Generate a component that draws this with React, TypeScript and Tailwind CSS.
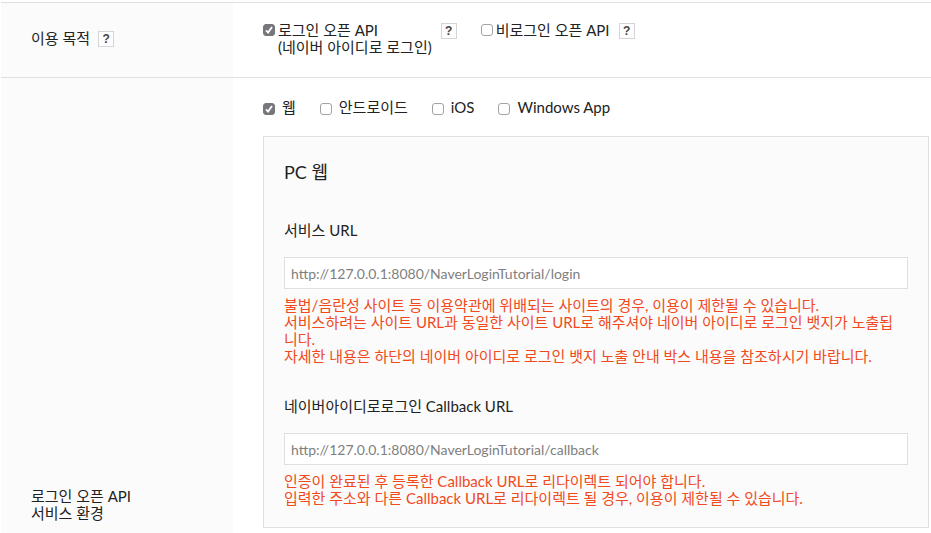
import React, { type ReactNode } from "react";

function HelpButton({ label }: { label: string }) {
  return (
    <button
      type="button"
      aria-label={label}
      className="flex size-4 shrink-0 items-center justify-center border border-[#d5d5d8] bg-[#fdfdfd] font-['Liberation_Sans',sans-serif] text-xs font-bold leading-none text-[#444444]"
    >
      ?
    </button>
  );
}

function Checkbox({ id, checked = false }: { id: string; checked?: boolean }) {
  return (
    <span className="grid size-3 shrink-0">
      <input
        id={id}
        type="checkbox"
        defaultChecked={checked}
        className="peer col-start-1 row-start-1 size-3 appearance-none rounded-[3px] border border-[#a3a3a6] bg-white checked:border-[#77777b] checked:bg-[#77777b]"
      />
      <svg
        viewBox="0 0 12 12"
        className="pointer-events-none invisible col-start-1 row-start-1 size-3 peer-checked:visible"
        fill="none"
        stroke="white"
        strokeWidth="1.8"
        aria-hidden="true"
      >
        <path d="M3 6.3 5.1 8.5 9 3" />
      </svg>
    </span>
  );
}

function Platform({ id, checked, children }: { id: string; checked?: boolean; children: ReactNode }) {
  return (
    <div className="flex items-center gap-[7px]">
      <span className="pt-0.5">
        <Checkbox id={id} checked={checked} />
      </span>
      <label htmlFor={id}>{children}</label>
    </div>
  );
}

function UrlField({ id, label, placeholder, children }: { id: string; label: string; placeholder: string; children: ReactNode }) {
  return (
    <div className="flex flex-col">
      <label htmlFor={id}>{label}</label>
      <input
        id={id}
        type="text"
        placeholder={placeholder}
        className="mt-[18px] h-8 w-full border border-[#dfdfe2] bg-white px-1.5 text-sm placeholder:text-[#808080] placeholder:opacity-100"
      />
      <div className="mt-2 text-[#f04a1d]">{children}</div>
    </div>
  );
}

export default function App() {
  return (
    <form className="flex min-h-screen flex-col bg-white pl-px pt-0.5 font-['Lato','Noto_Sans_CJK_KR',sans-serif] text-[15px] leading-[17px] text-[#222222]">
      <section className="flex border-y border-[#dfdfe5]">
        <div className="flex w-[232px] shrink-0 items-center gap-2 bg-[#fbfbfb] pb-[3px] pl-[30px]">
          <h2>이용 목적</h2>
          <HelpButton label="이용 목적 도움말" />
        </div>
        <div className="flex items-start gap-6 pb-[21px] pl-[30px] pt-[19px]">
          <div className="flex items-start gap-[9px]">
            <div className="flex items-start gap-[3px]">
              <span className="pt-0.5">
                <Checkbox id="login-api" checked />
              </span>
              <label htmlFor="login-api">
                로그인 오픈 API
                <br />
                (네이버 아이디로 로그인)
              </label>
            </div>
            <span className="pt-px">
              <HelpButton label="로그인 오픈 API 도움말" />
            </span>
          </div>
          <div className="flex items-start gap-[9px]">
            <div className="flex items-start gap-[3px]">
              <span className="pt-0.5">
                <Checkbox id="open-api" />
              </span>
              <label htmlFor="open-api">비로그인 오픈 API</label>
            </div>
            <span className="pt-px">
              <HelpButton label="비로그인 오픈 API 도움말" />
            </span>
          </div>
        </div>
      </section>

      <section className="flex flex-1">
        <div className="flex w-[232px] shrink-0 items-end bg-[#fbfbfb] pb-[11px] pl-[30px]">
          <h2>
            로그인 오픈 API
            <br />
            서비스 환경
          </h2>
        </div>
        <div className="min-w-0 flex-1 pb-[5px] pl-[30px] pr-0.5 pt-[21px]">
          <div className="flex gap-6">
            <Platform id="web" checked>
              웹
            </Platform>
            <Platform id="android">안드로이드</Platform>
            <Platform id="ios">iOS</Platform>
            <Platform id="windows">Windows App</Platform>
          </div>
          <div className="mt-5 border border-[#dfdfe2] bg-[#fbfbfb] px-5 pb-5 pt-[23px]">
            <h3 className="text-lg leading-6">PC 웹</h3>
            <div className="mt-[38px] flex flex-col gap-[33px]">
              <UrlField id="service-url" label="서비스 URL" placeholder="http://127.0.0.1:8080/NaverLoginTutorial/login">
                <p>불법/음란성 사이트 등 이용약관에 위배되는 사이트의 경우, 이용이 제한될 수 있습니다.</p>
                <p>
                  서비스하려는 사이트 URL과 동일한 사이트 URL로 해주셔야 네이버 아이디로 로그인 뱃지가 노출됩
                  <br />
                  니다.
                </p>
                <p>자세한 내용은 하단의 네이버 아이디로 로그인 뱃지 노출 안내 박스 내용을 참조하시기 바랍니다.</p>
              </UrlField>
              <UrlField
                id="callback-url"
                label="네이버아이디로로그인 Callback URL"
                placeholder="http://127.0.0.1:8080/NaverLoginTutorial/callback"
              >
                <p>인증이 완료된 후 등록한 Callback URL로 리다이렉트 되어야 합니다.</p>
                <p>입력한 주소와 다른 Callback URL로 리다이렉트 될 경우, 이용이 제한될 수 있습니다.</p>
              </UrlField>
            </div>
          </div>
        </div>
      </section>
    </form>
  );
}
